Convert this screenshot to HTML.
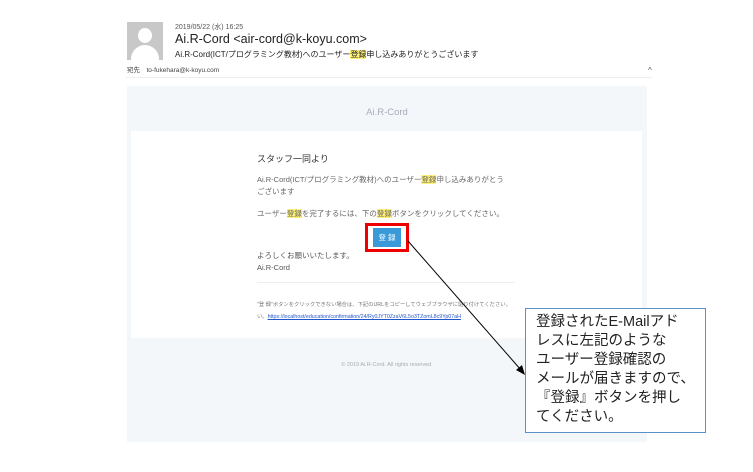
<!DOCTYPE html>
<html><head><meta charset="utf-8"><style>
*{margin:0;padding:0;box-sizing:border-box}
body{width:753px;height:472px;background:#fff;position:relative;overflow:hidden;font-family:"Liberation Sans","Noto Sans CJK JP",sans-serif;color:#333}
.a{position:absolute;white-space:nowrap}
.hl{background:#fff176}
</style></head><body>
<div class="a" style="left:127px;top:22px;width:36px;height:38px;background:#c8c8c8;overflow:hidden">
<div style="position:absolute;left:11px;top:6px;width:14px;height:15px;border-radius:50%;background:#fff"></div>
<div style="position:absolute;left:4px;top:23px;width:28px;height:22px;border-radius:14px 14px 0 0;background:#fff"></div>
</div>
<div class="a" style="left:175px;top:22px;font-size:7px;color:#555">2019/05/22 (水) 16:25</div>
<div class="a" style="left:175px;top:32px;font-size:12.5px;color:#222">Ai.R-Cord &lt;air-cord@k-koyu.com&gt;</div>
<div class="a" style="left:175px;top:49px;font-size:8px;color:#222">Ai.R-Cord(ICT/プログラミング教材)へのユーザー<span class="hl">登録</span>申し込みありがとうございます</div>
<div class="a" style="left:127px;top:64px;font-size:6.5px;color:#444">宛先　to-fukehara@k-koyu.com</div>
<div class="a" style="left:648px;top:66px;font-size:8px;color:#555">^</div>
<div class="a" style="left:126px;top:77px;width:526px;height:1px;background:#eee"></div>
<div class="a" style="left:127px;top:86px;width:520px;height:356px;background:#f4f7fa"></div>
<div class="a" style="left:127px;top:107px;width:520px;text-align:center;font-size:9.5px;color:#aab">Ai.R-Cord</div>
<div class="a" style="left:131px;top:131px;width:511px;height:207px;background:#fff"></div>
<div class="a" style="left:257px;top:152px;font-size:9px;color:#333">スタッフ一同より</div>
<div class="a" style="left:257px;top:174px;font-size:7.5px;color:#666;line-height:12px">Ai.R-Cord(ICT/プログラミング教材)へのユーザー<span class="hl">登録</span>申し込みありがとう<br>ございます</div>
<div class="a" style="left:257px;top:208px;font-size:7.5px;color:#666">ユーザー<span class="hl">登録</span>を完了するには、下の<span class="hl">登録</span>ボタンをクリックしてください。</div>
<div class="a" style="left:365px;top:223px;width:44px;height:29px;border:3px solid #e00"></div>
<div class="a" style="left:373px;top:228px;width:28px;height:19px;background:#3a9ad9;color:#fff;font-size:7.5px;text-align:center;line-height:19px">登 録</div>
<div class="a" style="left:257px;top:250px;font-size:7.5px;color:#555;line-height:12px">よろしくお願いいたします。<br>Ai.R-Cord</div>
<div class="a" style="left:257px;top:282px;width:258px;height:1px;background:#eee"></div>
<div class="a" style="left:257px;top:299px;font-size:5.3px;color:#777;line-height:12px">"登 録"ボタンをクリックできない場合は、下記のURLをコピーしてウェブブラウザに貼り付けてください。<br>い。<span style="color:#2255cc;text-decoration:underline">https://localhost/education/confirmation/24/Ry0JYT0ZzaV6L5o3TZomL8c9Yp07aH</span></div>
<div class="a" style="left:127px;top:362px;width:520px;text-align:center;font-size:5.5px;color:#aaa">© 2019 Ai.R-Cord. All rights reserved.</div>
<svg class="a" style="left:0;top:0" width="753" height="472"><line x1="408" y1="241" x2="521" y2="370" stroke="#000" stroke-width="1"/><polygon points="525,375 516,370 522,365" fill="#000"/></svg>
<div class="a" style="left:525px;top:308px;width:181px;height:125px;border:1px solid #5b8fc7;background:#fff;padding:4px 0 0 10px;font-size:14.5px;line-height:19px;color:#222;white-space:normal">登録されたE-Mailアド<br>レスに左記のような<br>ユーザー登録確認の<br>メールが届きますので、<br>『登録』ボタンを押し<br>てください。</div>
</body></html>
